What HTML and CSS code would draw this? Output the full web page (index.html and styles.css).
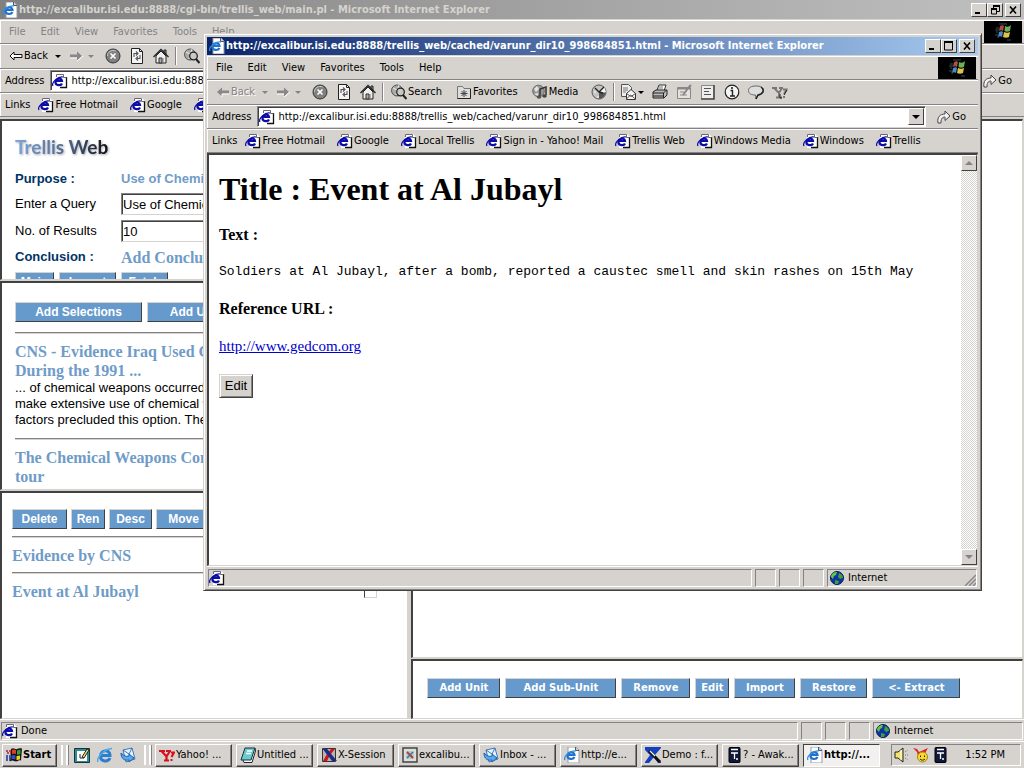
FILE: index.html
```html
<!DOCTYPE html>
<html lang="en">
<head>
<meta charset="utf-8">
<title>Trellis Web</title>
<link rel="stylesheet" href="styles.css">
</head>
<body>
<svg class="sprite" aria-hidden="true">
  <symbol id="i-page" viewBox="0 0 16 16"><path d="M4 1h8l3 3v11H4z" fill="#fff"/><path d="M8 14.500h7M14.500 4v11" fill="none" stroke="#111" stroke-width="1.300"/><path d="M4.500 4V1.500h7v3h3" fill="none" stroke="#667"/><path d="M10 10.500C9 13 3.500 12.500 3.500 9.500 3.500 5.500 9.500 4 10 8H4" fill="none" stroke="#0c0ca8" stroke-width="2.200"/><path d="M1 13C-1 10 6 3 11 4" fill="none" stroke="#0c0ca8" stroke-width="1.200"/></symbol>
  <symbol id="i-iepage" viewBox="0 0 16 16"><path d="M4 0h8l3 3v13H4z" fill="#fff" stroke="#99a"/><path d="M11.500 0v3.500H15" fill="#ccc" stroke="#556"/><path d="M10.500 10C9 13 3.500 12.500 3.500 9 3.500 5 10 3.500 10.500 7.800H4" fill="none" stroke="#2272cc" stroke-width="2.200"/><path d="M1 13C-1 10 6 3 12 4" fill="none" stroke="#2b8de0" stroke-width="1.200"/></symbol>
  <symbol id="i-ie" viewBox="0 0 16 16"><path d="M13 11C11 15.500 3.500 15 3.500 9 3.500 2.500 13 2 13 8.500H5" fill="none" stroke="#2b7fd0" stroke-width="3"/><path d="M1 15C-1 11 7 2 15 1.500" fill="none" stroke="#4fa8ea" stroke-width="1.600"/></symbol>
  <symbol id="i-back" viewBox="0 0 14 14"><path d="M1 7l4-4v2.500h8v3H5V11z" fill="#fff" stroke="#111"/></symbol>
  <symbol id="i-backoff" viewBox="0 0 14 14"><path d="M1 7l5-4.500V5.500h7v3H6v3z" fill="#888"/><path d="M6 9h7.500M6 12V9" stroke="#fff" fill="none"/></symbol>
  <symbol id="i-fwdoff" viewBox="0 0 14 14"><path d="M13 7L8 2.500v3H1v3h7v3z" fill="#888"/><path d="M1 9h7M8 12l6-5" stroke="#fff" fill="none"/></symbol>
  <symbol id="i-stop" viewBox="0 0 16 16"><circle cx="8" cy="8" r="7" fill="#808080" stroke="#333"/><path d="M2.500 8a5.500 5.500 0 0 1 8-5" fill="none" stroke="#ccc"/><path d="M5.500 5.500l5 5m0-5l-5 5" stroke="#fff" stroke-width="1.700"/></symbol>
  <symbol id="i-refresh" viewBox="0 0 16 16"><path d="M2.500.500h8l3 3v12h-11z" fill="#f4f4f4" stroke="#222"/><path d="M10.500.500v3h3" fill="none" stroke="#222"/><path d="M5 9V5.500h3M7 3.500l2 2-2 2M11 7v3.500H8M9 8.500l-2 2 2 2" fill="none" stroke="#555" stroke-width="1.100"/></symbol>
  <symbol id="i-home" viewBox="0 0 16 16"><path d="M11 2h2v5h-2z" fill="#999" stroke="#222"/><path d="M3 8v7h10V8L8 3z" fill="#eee" stroke="#222"/><path d="M.500 9L8 1.500 15.500 9" fill="none" stroke="#222" stroke-width="1.300"/><path d="M6 15v-5h3v5z" fill="#aaa" stroke="#333"/><path d="M10 10v5" stroke="#777"/></symbol>
  <symbol id="i-search" viewBox="0 0 16 16"><circle cx="6" cy="6.500" r="5.500" fill="#aaa" stroke="#555"/><path d="M2 4l4 2-1 5M8 1L7 4" stroke="#eee" fill="none"/><circle cx="9.500" cy="8" r="3.800" fill="#d6d3ce" fill-opacity=".8" stroke="#222" stroke-width="1.300"/><path d="M12 11l3.500 4" stroke="#222" stroke-width="2"/></symbol>
  <symbol id="i-fav" viewBox="0 0 16 16"><path d="M1.500 4V2.500h5L8 4.500h6.500v10h-13z" fill="#ddd" stroke="#777"/><path d="M14.500 5v9.500h-13" fill="none" stroke="#222"/><path d="M8 6v7M4.500 9.500h7M5.500 7l5 5M10.500 7l-5 5" stroke="#444"/></symbol>
  <symbol id="i-media" viewBox="0 0 16 16"><circle cx="6.500" cy="7" r="5.800" fill="#999" stroke="#666"/><path d="M2 5l3-3 2 3-3 3zM2 10l4-1v3" fill="#e4e4e4"/><path d="M8 12V5l6-2v8" fill="none" stroke="#333" stroke-width="1.500"/><ellipse cx="7" cy="13" rx="2.300" ry="1.800" fill="#555"/><ellipse cx="12.500" cy="12" rx="2.300" ry="1.800" fill="#444"/></symbol>
  <symbol id="i-history" viewBox="0 0 16 16"><circle cx="8" cy="8" r="7" fill="#c4c4c4" stroke="#555"/><path d="M8 8L13 2.500 15 8z" fill="#f5f5f5"/><path d="M8 14.500A6.500 6.500 0 0 0 14.500 9L8 8z" fill="#555"/><path d="M4 4l4 4 5-5M8 8l4 1" fill="none" stroke="#222" stroke-width="1.300"/><path d="M3 8h2M7 12v2" stroke="#fff"/></symbol>
  <symbol id="i-mail" viewBox="0 0 16 16"><path d="M1.500.500h7l3 3v9h-10z" fill="#eee" stroke="#555"/><path d="M3 4h5M3 6h5M3 8h3" stroke="#777"/><path d="M6.500 9.500l4.500-4 4.500 4v6h-9z" fill="#f8f8f8" stroke="#333"/><path d="M6.500 15l4-4 5 4M6.500 9.500l4.500 3 4.500-3" fill="none" stroke="#555"/></symbol>
  <symbol id="i-print" viewBox="0 0 16 16"><path d="M5 6l2-5h7l-2 6" fill="#fff" stroke="#333"/><path d="M1 8l3-2h11v5l-3 3H1z" fill="#bbb" stroke="#222"/><path d="M1 9h10.500l3-3M1 12h10M11.500 9v5" fill="none" stroke="#222"/><path d="M7 3h4M6 5h5" stroke="#777"/></symbol>
  <symbol id="i-edit" viewBox="0 0 16 16"><path d="M1.500 3.500h13v11h-13z" fill="#e4e2de" stroke="#888"/><path d="M2 4.500h12" stroke="#888" stroke-width="2"/><path d="M4 8h4M4 11h7" stroke="#888"/><path d="M7 11l6-8 2-2" stroke="#888" stroke-width="2"/></symbol>
  <symbol id="i-doc" viewBox="0 0 16 16"><path d="M1 1h12v13H1z" fill="#eee"/><path d="M1.500 14V1.500H13" fill="none" stroke="#888"/><path d="M14 1v14H1" fill="none" stroke="#444" stroke-width="1.600"/><path d="M4 4.500h7M4 7.500h5M4 10.500h7" stroke="#555"/></symbol>
  <symbol id="i-info" viewBox="0 0 16 16"><circle cx="8" cy="8" r="6.800" fill="#f4f4f4" stroke="#222" stroke-width="1.200"/><path d="M6.500 6.500H8.500V12M6 12h5" fill="none" stroke="#222" stroke-width="1.400"/><circle cx="8" cy="4" r="1.100" fill="#222"/></symbol>
  <symbol id="i-talk" viewBox="0 0 16 16"><path d="M8 2c4.500 0 7.500 1.500 7.500 4.500S13 11 10 11l-2 4-.500-4C3 11 .500 9.500.500 6.500S3.500 2 8 2z" fill="#ddd" stroke="#666"/><path d="M13 3c4 3 2 7-3 8l-2 4" fill="none" stroke="#222" stroke-width="1.500"/></symbol>
  <symbol id="i-yoff" viewBox="0 0 16 16"><path d="M0 4h5M7 4h4M2 4l5 5 3-5M7 9v4M4 13.500h6M11 5.500h3.500L12 10M11 13h2" fill="none" stroke="#777" stroke-width="1.800"/><path d="M8 10v4h2M15 6l-3 5" fill="none" stroke="#222"/></symbol>
  <symbol id="i-y" viewBox="0 0 16 16"><path d="M0 4h6M7 4h5M2.500 4l5 5.500L11 4M7.500 9v4M5 13.500h5M12 5.500h3L12.500 10M11.500 13h2" fill="none" stroke="#d8101c" stroke-width="2.200"/></symbol>
  <symbol id="i-go" viewBox="0 0 14 16"><path d="M1 14C0 8 3 5 8 5V2l5 5-5 4.500V8C5 8 4 10 4 14z" fill="#f2f2f2" stroke="#444"/><path d="M4 14c0-4 1-5 4-5.500" fill="none" stroke="#888"/></symbol>
  <symbol id="i-flag" viewBox="0 0 38 22"><path fill="#000" d="M0 0h38v22H0z"/><path d="M12 7h3M11 9h4M12 11h2M11 14h3M13 16h2M15 3h8M23 19h4" stroke="#35505c" stroke-width="1"/><path d="M16 5c2-1 3-1 4 0l-1 5c-1-1-3-1-4 0z" fill="#b0503a"/><path d="M21 5c2 1 4 1 6-1l-1 6c-2 1-4 1-5.500 0z" fill="#6cae59"/><path d="M15 11c2-1 3-1 4 0l-1 5c-1-1-3-1-4 0z" fill="#4c89c8"/><path d="M20 11c2 1 4 1 6 0l-1 5c-2 1-4 1-6 0z" fill="#dcc34c"/></symbol>
  <symbol id="i-start" viewBox="0 0 16 16"><path d="M5 2c3-2 4 1 6 0s3-1 5-.500l-1 12c-3-1-3 1-5 1s-3-2-6 0z" fill="#111"/><path d="M6 3c2-1 3 0 4 .300V7C8.500 6.500 7.500 6.500 6 7z" fill="#e33b22"/><path d="M11 3.500c1.500 0 2-1 3.500-1V7c-1.500 0-2 1-3.500 1z" fill="#2fa03a"/><path d="M5.500 8.500c1.500-1 3-.500 4 0v4c-1-.500-2.500-.800-4 0z" fill="#2d4fd0"/><path d="M10.500 9c1.500 0 2-.500 3.500-.500v4c-1.500 0-2 .500-3.500.500z" fill="#f0d020"/><path d="M0 4h5M1 6h4" stroke="#b02040" stroke-width="1.300" stroke-dasharray="2 1"/><path d="M0 9h4M0 11h4M0 13h4" stroke="#2030a0" stroke-width="1.300" stroke-dasharray="2 1"/></symbol>
  <symbol id="i-globe" viewBox="0 0 14 14"><circle cx="7" cy="7" r="6.500" fill="#1230a8" stroke="#0a1b50"/><path d="M1 6c0-3 3-5 6-5L6 4 4 5 3 8z" fill="#5cc845"/><path d="M9 2c3 1 4 3 4 5l-3 1-2-2zM5 9l4 1-1 3H5z" fill="#39a238"/></symbol>
  <symbol id="i-compose" viewBox="0 0 16 16"><path d="M.500 1.500h15v14H.500z" fill="#2f8a92" stroke="#14343c"/><path d="M3 4h10v10H3z" fill="#fff"/><path d="M6 7v4h4" fill="none" stroke="#222"/><path d="M8 10l5-8 2 1-5 8z" fill="#f5d75c" stroke="#222"/></symbol>
  <symbol id="i-outlook" viewBox="0 0 16 16"><path d="M3 3l9-2 3 11-9 3z" fill="#e8f4ff" stroke="#3b76b8"/><path d="M3 3l6 4 3-6" fill="none" stroke="#3b76b8"/><path d="M1 6c0 6 4 8 8 7v2l5-4-5-4v2c-3 1-5 0-8-3z" fill="#58a8ec" stroke="#1e5fa8"/></symbol>
  <symbol id="i-note" viewBox="0 0 16 16"><path d="M3 13l1 2.500h8L15.500 4 15 1" fill="#fff" stroke="#222"/><path d="M5 1h10l-4 12H1z" fill="#6cc9cc" stroke="#134"/><path d="M7 4h5M6 6.500h5" stroke="#fff" stroke-width="1.300"/></symbol>
  <symbol id="i-x" viewBox="0 0 16 16"><path d="M1.500 1.500h13v13h-13z" fill="#b8b4ae" stroke="#333"/><path d="M2 2h4l10 12h-5z" fill="#1a2c8c"/><path d="M10 2h4L9 8l-3 6H2l4-7z" fill="#d0161c"/><path d="M2 2h4l4 5-2 3z" fill="#1a2c8c"/></symbol>
  <symbol id="i-xc" viewBox="0 0 16 16"><path d="M1 1h14v14H1z" fill="#ddd" stroke="#444" stroke-width="1.500"/><path d="M4 4h8v8H4z" fill="#a8d8b8"/><path d="M5 5l6 6" stroke="#c33" stroke-width="2"/><path d="M11 5l-6 6" stroke="#46b" stroke-width="1.500"/></symbol>
  <symbol id="i-demo" viewBox="0 0 16 16"><path d="M0 0h16v1L10 8l6 7v1H0z" fill="#1440c0"/><path d="M0 3l5 5-5 7zM4 16l5-6 4 6z" fill="#d6d3ce"/><path d="M4 4l11 11" stroke="#111" stroke-width="3"/><path d="M5 4l5 5" stroke="#f6f2d8" stroke-width="1.300"/></symbol>
  <symbol id="i-phone" viewBox="0 0 16 16"><rect x="3" y=".5" width="11" height="15" rx="1" fill="#10183c" stroke="#000"/><path d="M5 2.500h7M5 6h7M8.500 6v6M10 12h2" stroke="#fff" stroke-width="1.300"/></symbol>
  <symbol id="i-sound" viewBox="0 0 16 16"><path d="M1 5h3l5-4v14l-5-4H1z" fill="#f2e16a" stroke="#222"/><path d="M7 3v10" stroke="#fff"/><path d="M11 5l3-2M11 8h4M11 11l3 2" stroke="#777" stroke-dasharray="1 1"/></symbol>
  <symbol id="i-msgr" viewBox="0 0 16 16"><path d="M0 1l4 1 2 3 9-4-4 7-6 1-1-4z" fill="#e02020"/><circle cx="9.500" cy="10" r="5" fill="#f7d838" stroke="#a80"/><path d="M7.500 8.500v1.500M11.500 8.500v1.500M7 12c1.500 1.500 3.500 1.500 5 0" fill="none" stroke="#222"/></symbol>
</svg>

<div class="desktop">
  <main class="window main">
    <header class="title title-off">
      <svg class="ico"><use href="#i-iepage"/></svg>
      <span class="caption">http://excalibur.isi.edu:8888/cgi-bin/trellis_web/main.pl - Microsoft Internet Explorer</span>
      <button class="sys" aria-label="Minimize"><svg viewBox="0 0 12 10"><path d="M2 8h5" stroke="#000" stroke-width="2"/></svg></button>
      <button class="sys" aria-label="Restore"><svg viewBox="0 0 12 10"><path d="M4.500 3V1.500h6v5H8" fill="none" stroke="#000"/><path d="M4 1h7M2 4h6" stroke="#000" stroke-width="2"/><path d="M2.500 4v5h5V4" fill="none" stroke="#000"/></svg></button>
      <button class="sys sys-close" aria-label="Close"><svg viewBox="0 0 12 10"><path d="M3 1.500l6 7m0-7l-6 7" stroke="#000" stroke-width="1.600"/></svg></button>
    </header>
    <div class="bar menu menu-off">
      <nav><a href="#">File</a><a href="#">Edit</a><a href="#">View</a><a href="#">Favorites</a><a href="#">Tools</a><a href="#">Help</a></nav>
      <svg class="brand"><use href="#i-flag"/></svg>
    </div>
    <div class="bar tools">
      <button class="tool nav-back"><svg class="arr"><use href="#i-back"/></svg>Back</button>
      <span class="drop"></span>
      <button class="tool nav-fwd" aria-label="Forward"><svg class="arr"><use href="#i-fwdoff"/></svg></button>
      <span class="drop off"></span>
      <button class="tool wide" aria-label="Stop"><svg class="ico"><use href="#i-stop"/></svg></button>
      <button class="tool wide" aria-label="Refresh"><svg class="ico"><use href="#i-refresh"/></svg></button>
      <button class="tool wide" aria-label="Home"><svg class="ico"><use href="#i-home"/></svg></button>
      <i class="sep"></i>
      <button class="tool labelled" aria-label="Search"><svg class="ico"><use href="#i-search"/></svg></button>
    </div>
    <div class="bar address">
      <label for="url1">Address</label>
      <div class="combo"><svg class="ico"><use href="#i-page"/></svg><input id="url1" value="http://excalibur.isi.edu:8888/cgi-bin/trellis_web/main.pl"><button class="drop-btn" aria-label="Show addresses"><span class="drop"></span></button></div>
      <button class="go go-edge"><svg class="ico"><use href="#i-go"/></svg>Go</button>
    </div>
    <div class="bar links">
      <span>Links</span>
      <a href="#"><svg class="ico"><use href="#i-page"/></svg>Free Hotmail</a>
      <a href="#"><svg class="ico"><use href="#i-page"/></svg>Google</a>
      <a href="#" aria-label="Local Trellis"><svg class="ico"><use href="#i-page"/></svg></a>
    </div>

    <div class="frameset">
      <div class="frames-left">
        <section class="frame query">
          <div class="logo">Trellis Web</div>
          <form class="fields">
            <b class="name">Purpose :</b><b class="blue">Use of Chemical Weapons</b>
            <label for="q">Enter a Query</label><input id="q" value="Use of Chemical Weapons">
            <label for="n">No. of Results</label><input id="n" value="10">
            <b class="name">Conclusion :</b><a class="topic" href="#">Add Conclusion</a>
          </form>
          <div class="row"><button class="btn w39">Main</button><button class="btn w57">Import</button><button class="btn w47">Fetch</button></div>
        </section>
        <section class="frame results">
          <div class="row"><button class="btn w127">Add Selections</button><button class="btn w127">Add User URL</button></div>
          <hr>
          <a class="topic" href="#">CNS - Evidence Iraq Used Chemical Weapons<br>During the 1991 ...</a>
          <p>... of chemical weapons occurred. Iraq did not<br>make extensive use of chemical weapons, as<br>factors precluded this option. The</p>
          <hr>
          <a class="topic" href="#">The Chemical Weapons Convention<br>tour</a>
        </section>
        <section class="frame items">
          <div class="row"><button class="btn w55">Delete</button><button class="btn w34">Ren</button><button class="btn w43">Desc</button><button class="btn w55">Move</button></div>
          <hr>
          <a class="topic" href="#">Evidence by CNS</a>
          <hr>
          <div class="pick"><a class="topic" href="#">Event at Al Jubayl</a><input type="checkbox" aria-label="Event at Al Jubayl"></div>
        </section>
      </div>
      <div class="frames-right">
        <section class="frame"></section>
        <section class="frame actions">
          <div class="row verd"><button class="btn w73">Add Unit</button><button class="btn w111">Add Sub-Unit</button><button class="btn w69">Remove</button><button class="btn w34">Edit</button><button class="btn w61">Import</button><button class="btn w67">Restore</button><button class="btn w88">&lt;- Extract</button></div>
        </section>
      </div>
    </div>
    <footer class="status">
      <div class="pane grow"><svg class="ico"><use href="#i-page"/></svg>Done</div><div class="pane"></div><div class="pane"></div><div class="pane"></div>
      <div class="pane zone"><svg class="globe"><use href="#i-globe"/></svg>Internet</div>
    </footer>
  </main>

  <section class="window popup">
    <header class="title title-on">
      <svg class="ico"><use href="#i-iepage"/></svg>
      <span class="caption">http://excalibur.isi.edu:8888/trellis_web/cached/varunr_dir10_998684851.html - Microsoft Internet Explorer</span>
      <button class="sys" aria-label="Minimize"><svg viewBox="0 0 12 10"><path d="M2 8h5" stroke="#000" stroke-width="2"/></svg></button>
      <button class="sys" aria-label="Maximize"><svg viewBox="0 0 12 10"><path d="M1.500 1v8h8V1" fill="none" stroke="#000"/><path d="M1 1h9" stroke="#000" stroke-width="2"/></svg></button>
      <button class="sys sys-close" aria-label="Close"><svg viewBox="0 0 12 10"><path d="M3 1.500l6 7m0-7l-6 7" stroke="#000" stroke-width="1.600"/></svg></button>
    </header>
    <div class="bar menu">
      <nav><a href="#">File</a><a href="#">Edit</a><a href="#">View</a><a href="#">Favorites</a><a href="#">Tools</a><a href="#">Help</a></nav>
      <svg class="brand"><use href="#i-flag"/></svg>
    </div>
    <div class="bar tools">
      <button class="tool nav-back dim"><svg class="arr"><use href="#i-backoff"/></svg>Back</button>
      <span class="drop off"></span>
      <button class="tool nav-fwd" aria-label="Forward"><svg class="arr"><use href="#i-fwdoff"/></svg></button>
      <span class="drop off"></span>
      <button class="tool wide" aria-label="Stop"><svg class="ico"><use href="#i-stop"/></svg></button>
      <button class="tool wide" aria-label="Refresh"><svg class="ico"><use href="#i-refresh"/></svg></button>
      <button class="tool wide" aria-label="Home"><svg class="ico"><use href="#i-home"/></svg></button>
      <i class="sep"></i>
      <button class="tool labelled"><svg class="ico"><use href="#i-search"/></svg>Search</button>
      <button class="tool labelled"><svg class="ico"><use href="#i-fav"/></svg>Favorites</button>
      <button class="tool labelled"><svg class="ico"><use href="#i-media"/></svg>Media</button>
      <button class="tool wide" aria-label="History"><svg class="ico"><use href="#i-history"/></svg></button>
      <i class="sep"></i>
      <button class="tool mail" aria-label="Mail"><svg class="ico"><use href="#i-mail"/></svg><span class="drop"></span></button>
      <button class="tool wide" aria-label="Print"><svg class="ico"><use href="#i-print"/></svg></button>
      <button class="tool wide" aria-label="Edit page"><svg class="ico"><use href="#i-edit"/></svg></button>
      <button class="tool wide" aria-label="Discuss"><svg class="ico"><use href="#i-doc"/></svg></button>
      <button class="tool wide" aria-label="Information"><svg class="ico"><use href="#i-info"/></svg></button>
      <button class="tool wide" aria-label="Messenger"><svg class="ico"><use href="#i-talk"/></svg></button>
      <button class="tool wide" aria-label="Yahoo"><svg class="ico"><use href="#i-yoff"/></svg></button>
    </div>
    <div class="bar address">
      <label for="url2">Address</label>
      <div class="combo"><svg class="ico"><use href="#i-page"/></svg><input id="url2" value="http://excalibur.isi.edu:8888/trellis_web/cached/varunr_dir10_998684851.html"><button class="drop-btn" aria-label="Show addresses"><span class="drop"></span></button></div>
      <button class="go"><svg class="ico"><use href="#i-go"/></svg>Go</button>
    </div>
    <div class="bar links">
      <span>Links</span>
      <a href="#"><svg class="ico"><use href="#i-page"/></svg>Free Hotmail</a>
      <a href="#"><svg class="ico"><use href="#i-page"/></svg>Google</a>
      <a href="#"><svg class="ico"><use href="#i-page"/></svg>Local Trellis</a>
      <a href="#"><svg class="ico"><use href="#i-page"/></svg>Sign in - Yahoo! Mail</a>
      <a href="#"><svg class="ico"><use href="#i-page"/></svg>Trellis Web</a>
      <a href="#"><svg class="ico"><use href="#i-page"/></svg>Windows Media</a>
      <a href="#"><svg class="ico"><use href="#i-page"/></svg>Windows</a>
      <a href="#"><svg class="ico"><use href="#i-page"/></svg>Trellis</a>
    </div>
    <div class="client">
      <article class="page">
        <h1>Title : Event at Al Jubayl</h1>
        <h2>Text :</h2>
        <pre>Soldiers at Al Jubayl, after a bomb, reported a caustec smell and skin rashes on 15th May</pre>
        <h2>Reference URL :</h2>
        <a class="ref" href="#">http://www.gedcom.org</a>
        <button class="edit">Edit</button>
      </article>
      <div class="scroll"><button aria-label="Scroll up"><span class="drop off up"></span></button><button aria-label="Scroll down"><span class="drop off"></span></button></div>
    </div>
    <footer class="status">
      <div class="pane grow"><svg class="ico"><use href="#i-page"/></svg></div><div class="pane"></div><div class="pane"></div><div class="pane"></div>
      <div class="pane zone"><svg class="globe"><use href="#i-globe"/></svg>Internet<svg class="grip" viewBox="0 0 12 12"><path d="M1 12L12 1M5 12l7-7M9 12l3-3" stroke="#888" stroke-width="1.500"/></svg></div>
    </footer>
  </section>

  <footer class="taskbar">
    <button class="start"><svg class="ico"><use href="#i-start"/></svg>Start</button>
    <i class="handle"></i>
    <div class="quick">
      <button aria-label="Compose"><svg class="ico"><use href="#i-compose"/></svg></button>
      <button aria-label="Internet Explorer"><svg class="ico"><use href="#i-ie"/></svg></button>
      <button aria-label="Outlook"><svg class="ico"><use href="#i-outlook"/></svg></button>
    </div>
    <i class="handle"></i>
    <div class="tasks">
      <button class="task"><svg class="ico"><use href="#i-y"/></svg>Yahoo! ...</button>
      <button class="task"><svg class="ico"><use href="#i-note"/></svg>Untitled ...</button>
      <button class="task"><svg class="ico"><use href="#i-x"/></svg>X-Session</button>
      <button class="task"><svg class="ico"><use href="#i-xc"/></svg>excalibu...</button>
      <button class="task"><svg class="ico"><use href="#i-outlook"/></svg>Inbox - ...</button>
      <button class="task"><svg class="ico"><use href="#i-iepage"/></svg>http://e...</button>
      <button class="task"><svg class="ico"><use href="#i-demo"/></svg>Demo : f...</button>
      <button class="task"><svg class="ico"><use href="#i-phone"/></svg>? - Awak...</button>
      <button class="task current"><svg class="ico"><use href="#i-iepage"/></svg>http://...</button>
    </div>
    <div class="tray"><svg class="ico"><use href="#i-sound"/></svg><svg class="ico"><use href="#i-msgr"/></svg><svg class="ico"><use href="#i-phone"/></svg><time>1:52 PM</time></div>
  </footer>
</div>
</body>
</html>
```

FILE: styles.css
```css
:root {
  --face: #d6d3ce;
  --light: #fff;
  --mid: #848284;
  --dark: #424142;
  --blue: #6699cc;
}
* { box-sizing: border-box; }
body {
  margin: 0;
  font: 11px/14px "DejaVu Sans Condensed", "DejaVu Sans", sans-serif;
  color: #000;
}
button, input { font: inherit; color: inherit; margin: 0; }
button { border: 0; background: none; padding: 0; white-space: nowrap; }
a { color: inherit; text-decoration: none; }
svg { display: block; flex: none; }
.sprite { position: absolute; width: 0; height: 0; }
.ico { width: 16px; height: 16px; }

.desktop { position: relative; height: 100vh; display: flex; flex-direction: column; background: var(--face); overflow: hidden; }
.window { display: flex; flex-direction: column; flex: 1; min-height: 0; background: var(--face); }
.popup {
  position: absolute; left: 203px; top: 33px; right: 42px; bottom: 177px;
  padding: 3px 3px 2px;
  border: 1px solid;
  border-color: var(--face) var(--dark) var(--dark) var(--face);
  box-shadow: inset 1px 1px #fff, inset -1px -1px var(--mid);
}

.title { display: flex; align-items: center; height: 19px; padding: 0 3px 0 2px; font-weight: bold; color: #fff; flex: none; border-bottom: 1px solid var(--face); }
.main .title { height: 20px; }
.title-on { background: linear-gradient(90deg, #0a246a, #a6caf0); }
.title-off { background: linear-gradient(90deg, #808080, #c0c0c0); color: var(--face); }
.caption { flex: 1; min-width: 0; overflow: hidden; white-space: nowrap; padding-left: 1px; }
.sys {
  width: 16px; height: 14px; background: var(--face);
  border: 1px solid; border-color: #fff var(--dark) var(--dark) #fff;
  display: grid; place-items: center;
}
.sys svg { width: 12px; height: 10px; }
.sys-close { margin-left: 2px; }

.bar { display: flex; align-items: center; height: 24px; flex: none; padding: 0 2px 0 5px; border-bottom: 1px solid var(--mid); box-shadow: inset 0 1px #fff, inset 1px 0 #fff; overflow: hidden; }
.menu { padding-right: 2px; }
.menu nav { flex: 1; display: flex; gap: 15px; padding-left: 4px; }
.menu-off { color: #848284; }
.brand { width: 38px; height: 22px; }
.tools { height: 25px; }
.drop { width: 0; height: 0; border: 4px solid transparent; border-bottom: 0; border-top-color: #000; flex: none; }
.tools .drop { border-width: 3px; border-bottom: 0; margin: 0 1px; }
.drop.off { border-top-color: var(--mid); }
.drop.up { transform: rotate(180deg); }
.tool { display: flex; align-items: center; justify-content: center; gap: 1px; flex: none; }
.arr { width: 14px; height: 14px; }
.nav-back { padding: 0 6px 0 4px; gap: 1px; }
.dim { color: var(--mid); text-shadow: 1px 1px #fff; }
.nav-fwd { padding: 0 4px 0 7px; }
.wide { width: 24px; }
.sep { width: 2px; height: 18px; border-left: 1px solid var(--mid); border-right: 1px solid #fff; margin: 0 2px; flex: none; }
.tools .drop + .wide { margin-left: 6px; }
.labelled { padding: 0 9px 0 5px; }
.mail { padding: 0 3px; }

.address label { margin-right: 6px; }
.combo { flex: 1; min-width: 0; display: flex; align-items: center; height: 21px; background: #fff; padding: 0 1px; border: 1px solid; border-color: var(--mid) #fff #fff var(--mid); box-shadow: inset 1px 1px var(--dark); }
.combo input { flex: 1; min-width: 0; border: 0; padding: 0 0 0 3px; background: none; outline: 0; }
.drop-btn { width: 16px; height: 17px; background: var(--face); border: 1px solid; border-color: #fff var(--dark) var(--dark) #fff; display: grid; place-items: center; }
.go { display: flex; align-items: center; padding: 0 10px; }
.links { gap: 12px; }
.links span { margin-right: -4px; }
.links a { display: flex; align-items: center; gap: 1px; flex: none; white-space: nowrap; }

.frameset { flex: 1; min-height: 0; display: grid; grid-template-columns: 2fr 3fr; gap: 3px; margin-top: 2px; }
.frames-left { display: grid; grid-template-rows: 161px 209px 1fr; gap: 1px; min-width: 0; }
.frames-right { display: grid; grid-template-rows: 1fr 60px; gap: 1px; min-width: 0; padding-right: 1px; }
.frame { background: #fff; border: solid; border-width: 2px 1px 1px 2px; border-color: var(--dark) var(--face) var(--face) var(--dark); overflow: hidden; min-height: 0; min-width: 0; font: 13px/16px "Liberation Sans", Arial, sans-serif; padding: 0 13px; }
.logo {
  font: bold 19px/24px Lato, sans-serif;
  width: max-content; margin: 14px 0 11px;
  background: linear-gradient(90deg, #7fa8d8, #4a6080 60%, #111);
  -webkit-background-clip: text; background-clip: text; color: transparent;
  filter: drop-shadow(1px 1px 1px #aab);
}
.fields { display: grid; grid-template-columns: 106px 1fr; grid-template-rows: 18px 22px 22px 20px; align-items: center; row-gap: 5px; margin-bottom: 5px; }
.fields input { width: 200px; height: 22px; padding: 0 1px; border: 1px solid; border-color: var(--mid) #d6d3ce #d6d3ce var(--mid); box-shadow: inset 1px 1px var(--dark); background: #fff; }
.name { color: #003366; }
.blue { color: #6f9bc8; white-space: nowrap; }
.topic { display: block; font: bold 16px/19px "Liberation Serif", "Times New Roman", serif; color: #6f9bc8; white-space: nowrap; }
.row { display: flex; gap: 5px; white-space: nowrap; }
.btn { flex: none; height: 20px; background: var(--blue); color: #fff; font: bold 12px/16px "Liberation Sans", Arial, sans-serif; border: 1px solid; border-color: var(--face) var(--dark) var(--dark) var(--face); }
.verd .btn { font: bold 10px/16px "DejaVu Sans", Verdana, sans-serif; }
.w34 { width: 34px; } .w39 { width: 39px; } .w43 { width: 43px; } .w47 { width: 47px; }
.w55 { width: 55px; } .w57 { width: 57px; } .w61 { width: 61px; } .w67 { width: 67px; }
.w69 { width: 69px; } .w73 { width: 73px; } .w88 { width: 88px; } .w111 { width: 111px; } .w127 { width: 127px; }
.results { padding-top: 19px; }
.results p { margin: 0; white-space: nowrap; }
hr { margin: 10px 0 8px; height: 2px; border: 0; border-top: 1px solid var(--mid); border-bottom: 1px solid var(--face); }
.items { padding: 16px 10px 0; }
.items .row { gap: 4px; }
.items hr { margin: 7px 0 8px; }
.pick { display: flex; justify-content: space-between; align-items: center; padding-right: 20px; }
.pick input { width: 13px; height: 13px; appearance: none; border: 1px solid; border-color: var(--mid) var(--face) var(--face) var(--dark); }
.actions { padding: 17px 14px 0; }

.status { display: flex; gap: 3px; height: 22px; flex: none; padding: 2px 1px 1px; border-top: 1px solid #fff; }
.pane { width: 21px; display: flex; align-items: center; border: 1px solid; border-color: var(--mid) #fff #fff var(--mid); }
.pane.grow { flex: 1; gap: 3px; }
.pane.zone { width: 150px; padding-left: 2px; gap: 4px; }
.globe { width: 14px; height: 14px; }
.grip { width: 12px; height: 12px; margin-left: auto; align-self: flex-end; }

.client { flex: 1; min-height: 0; display: flex; background: #fff; border: solid; border-width: 2px 1px 1px 2px; border-color: var(--dark) var(--face) var(--face) var(--dark); }
.page { flex: 1; min-width: 0; overflow: hidden; display: flex; flex-direction: column; align-items: flex-start; gap: 19px; padding: 16px 10px; font: 16px/18px "Liberation Serif", "Times New Roman", serif; }
.page h1 { margin: 0; font-size: 32px; line-height: 36px; }
.page h2 { margin: 0; font-size: 16px; line-height: 18px; }
.page pre { margin: 0; font: 13px/18px "Liberation Mono", "Courier New", monospace; }
.ref { font-size: 15px; color: #0000cc; text-decoration: underline; }
.edit { width: 34px; height: 24px; font: 13px/16px "Liberation Sans", Arial, sans-serif; background: var(--face); border: 1px solid; border-color: var(--face) var(--dark) var(--dark) var(--face); box-shadow: inset 1px 1px #fff, inset -1px -1px var(--mid); }
.scroll { width: 16px; display: flex; flex-direction: column; justify-content: space-between; background: repeating-conic-gradient(#fff 0 25%, #d6d3ce 0 50%) 0 0 / 2px 2px; }
.scroll button { height: 16px; background: var(--face); border: 1px solid; border-color: #fff var(--dark) var(--dark) #fff; display: grid; place-items: center; }

.taskbar { display: flex; align-items: center; height: 27px; flex: none; border-top: 1px solid #fff; padding: 0 3px 0 2px; }
.start, .task { display: flex; align-items: center; height: 23px; background: var(--face); border: 1px solid; border-color: #fff var(--dark) var(--dark) #fff; box-shadow: inset -1px -1px var(--mid); overflow: hidden; }
.start { width: 55px; padding-left: 3px; gap: 1px; font-weight: bold; flex: none; }
.handle { width: 7px; height: 20px; border: solid #fff; border-width: 0 2px; box-shadow: 1px 0 var(--mid); margin: 0 4px; flex: none; }
.quick { display: flex; gap: 7px; padding: 0 4px 0 2px; }
.tasks { flex: 1; display: flex; gap: 4px; min-width: 0; }
.task { flex: 0 1 77px; min-width: 0; padding-left: 3px; gap: 1px; }
.task.current { font-weight: bold; border-color: var(--dark) #fff #fff var(--dark); box-shadow: none; background: #f2f1ef; }
.tray { display: flex; align-items: center; gap: 3px; height: 22px; width: 130px; flex: none; padding: 0 15px 0 2px; border: 1px solid; border-color: var(--mid) #fff #fff var(--mid); }
.tray time { margin-left: auto; }
```
